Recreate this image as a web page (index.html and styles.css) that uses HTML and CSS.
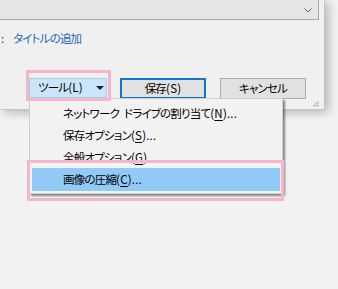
FILE: index.html
```html
<!DOCTYPE html>
<html lang="ja">
<head>
<meta charset="utf-8">
<link rel="stylesheet" href="styles.css">
</head>
<body>
<div class="dialog">
  <div class="combo">
    <svg class="chev" width="8" height="5" viewBox="0 0 8 5"><path d="M0.5 0.5 L4 4 L7.5 0.5" fill="none" stroke="#606060" stroke-width="1"/></svg>
  </div>
  <div class="title-row"><span class="colon">:</span><span class="link">タイトルの追加</span></div>
  <div class="buttons">
    <div class="btn btn-tools"><span class="tl">ツール<span class="lat">(L)</span></span><svg width="8" height="4" viewBox="0 0 8 4"><path d="M0 0 H8 L4 4 Z" fill="#202020"/></svg></div>
    <div class="btn btn-save">保存<span class="lat">(S)</span></div>
    <div class="btn btn-cancel">キャンセル</div>
  </div>
  <svg class="grip" width="7" height="7" viewBox="0 0 7 7" fill="#b8b8b8"><rect x="5" y="1" width="1.5" height="1.5"/><rect x="3" y="3" width="1.5" height="1.5"/><rect x="5" y="3" width="1.5" height="1.5"/><rect x="1" y="5" width="1.5" height="1.5"/><rect x="3" y="5" width="1.5" height="1.5"/><rect x="5" y="5" width="1.5" height="1.5"/></svg>
</div>
<div class="menu">
  <div class="item">ネットワーク&#8194;ドライブの割り当て<span class="lat">(<u>N</u>)...</span></div>
  <div class="item">保存オプション<span class="lat">(<u>S</u>)...</span></div>
  <div class="item">全般オプション<span class="lat">(<u>G</u>)...</span></div>
  <div class="item item-active">画像の圧縮<span class="lat">(<u>C</u>)...</span></div>
</div>
<div class="hl hl-tools"></div>
<div class="hl hl-item"></div>
</body>
</html>
```
FILE: styles.css
```css
html, body {
  margin: 0;
  padding: 0;
}
body {
  width: 338px;
  height: 289px;
  background: #f2f2f2;
  font-family: "Noto Sans CJK JP", "Noto Sans", sans-serif;
  font-feature-settings: "palt";
  font-size: 11.5px;
  letter-spacing: -0.8px;
  color: #000;
  position: relative;
  overflow: hidden;
}
.lat {
  letter-spacing: 0.2px;
}
.dialog {
  width: 324px;
  height: 109px;
  background: #f0f0f0;
  box-shadow: 1px 1px 0 #c4c4c4, 4px 3px 10px rgba(0, 0, 0, 0.28);
  position: relative;
  display: flex;
  flex-direction: column;
}
.combo {
  height: 19px;
  margin-right: 5px;
  background: #e5e5e5;
  border-bottom: 1px solid #a9a9a9;
  border-right: 1px solid #a9a9a9;
  display: flex;
  align-items: center;
  justify-content: flex-end;
}
.chev {
  margin-right: 6px;
  margin-top: 2px;
}
.title-row {
  display: flex;
  align-items: center;
  height: 16px;
  line-height: 16px;
  margin-top: 10px;
}
.colon {
  width: 13px;
  padding-left: 1px;
  box-sizing: border-box;
  color: #333;
}
.link {
  color: #1c64bf;
}
.buttons {
  display: flex;
  margin-top: 32px;
  margin-left: 29px;
  gap: 13px;
  align-items: flex-start;
}
.btn {
  box-sizing: border-box;
  height: 21px;
  display: flex;
  align-items: center;
  justify-content: center;
  background: #e1e1e1;
  border: 1px solid #adadad;
  line-height: 1;
}
.btn-tools {
  width: 78px;
  height: 20px;
  background: #cce4f7;
  border-color: #a6cdf0;
  justify-content: flex-start;
  padding-left: 8px;
}
.btn-tools .tl {
  width: 58px;
}
.btn-save {
  width: 86px;
  border: 2px solid #0f75cf;
}
.btn-cancel {
  width: 86px;
  margin-left: 1px;
}
.grip {
  position: absolute;
  right: 5px;
  bottom: 2px;
}
.menu {
  position: absolute;
  left: 29px;
  top: 98px;
  width: 254px;
  height: 96px;
  box-sizing: border-box;
  background: #f2f2f2;
  border: 1px solid #cfcfcf;
  padding: 3px 2px;
  box-shadow: 2px 2px 2px rgba(0, 0, 0, 0.45);
}
.item {
  height: 22px;
  line-height: 22px;
  padding-left: 31px;
}
.item u {
  text-underline-offset: 2px;
}
.item-active {
  background: #91c9f7;
  height: 23px;
}
.hl {
  position: absolute;
  border: 3px solid #f5b6ca;
  box-sizing: border-box;
}
.hl-tools {
  left: 26px;
  top: 70px;
  width: 85px;
  height: 31px;
}
.hl-item {
  left: 27px;
  top: 160px;
  width: 257px;
  height: 41px;
}
```
